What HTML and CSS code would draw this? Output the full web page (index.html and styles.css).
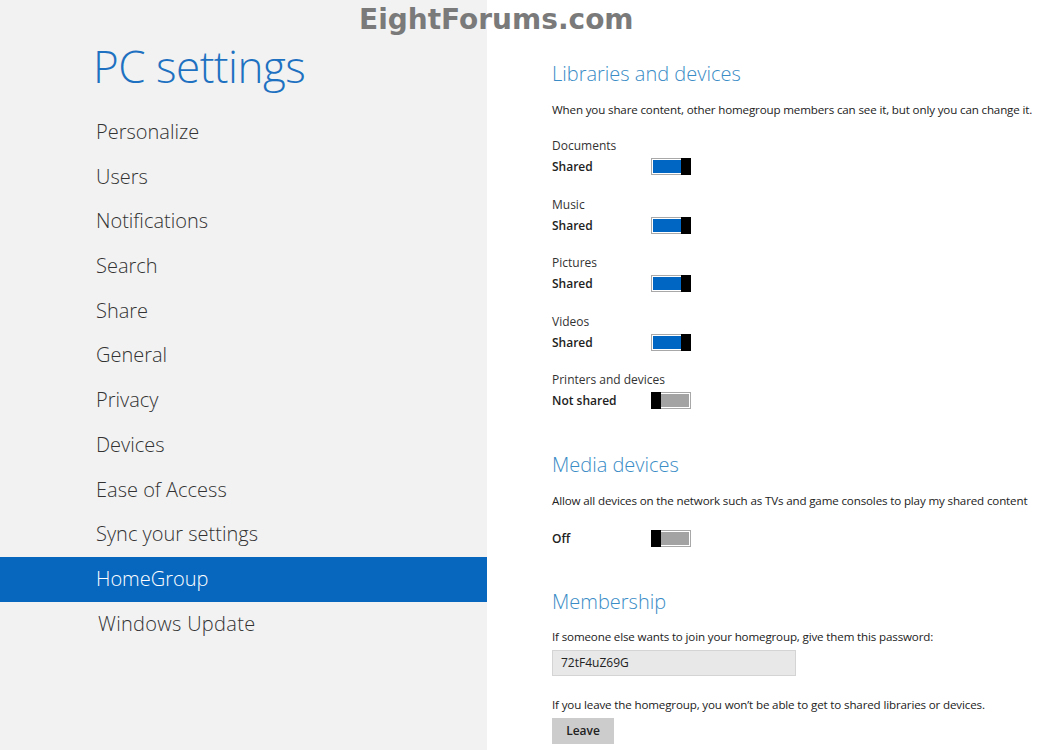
FILE: index.html
```html
<!DOCTYPE html>
<html lang="en">
<head>
  <meta charset="UTF-8" />
  <title>PC settings - HomeGroup</title>
  <link rel="stylesheet" href="styles.css">
</head>
<body>

  <div class="watermark">EightForums.com</div>

  <!-- LEFT MENU -->
  <div class="sidebar">
    <h1>PC settings</h1>
    <ul class="menu">
      <li>Personalize</li>
      <li>Users</li>
      <li>Notifications</li>
      <li>Search</li>
      <li>Share</li>
      <li>General</li>
      <li>Privacy</li>
      <li>Devices</li>
      <li>Ease of Access</li>
      <li>Sync your settings</li>
      <li class="active">HomeGroup</li>
      <li class="update">Windows Update</li>
    </ul>
  </div>

  <!-- HOMEGROUP PAGE -->
  <div class="content">
    <h2>Libraries and devices</h2>
    <p class="desc">When you share content, other homegroup members can see it, but only you can change it.</p>

    <div class="setting">
      <div class="name">Documents</div>
      <div class="state"><span>Shared</span><div class="toggle on"></div></div>
    </div>
    <div class="setting">
      <div class="name">Music</div>
      <div class="state"><span>Shared</span><div class="toggle on"></div></div>
    </div>
    <div class="setting">
      <div class="name">Pictures</div>
      <div class="state"><span>Shared</span><div class="toggle on"></div></div>
    </div>
    <div class="setting">
      <div class="name">Videos</div>
      <div class="state"><span>Shared</span><div class="toggle on"></div></div>
    </div>
    <div class="setting">
      <div class="name">Printers and devices</div>
      <div class="state"><span>Not shared</span><div class="toggle"></div></div>
    </div>

    <h2 class="section-title">Media devices</h2>
    <p class="desc">Allow all devices on the network such as TVs and game consoles to play my shared content</p>
    <div class="state media"><span>Off</span><div class="toggle"></div></div>

    <h2 class="section-title membership">Membership</h2>
    <p class="desc">If someone else wants to join your homegroup, give them this password:</p>
    <div class="password">72tF4uZ69G</div>
    <p class="desc leave-text">If you leave the homegroup, you won’t be able to get to shared libraries or devices.</p>
    <button class="leave">Leave</button>
  </div>

</body>
</html>
```

FILE: styles.css
```css
body {
  margin: 0;
  padding: 0;
  display: flex;
  height: 750px;
  overflow: hidden;
  font-family: 'Open Sans', 'Noto Sans', sans-serif;
  background-color: #ffffff;
  color: #222222;
}

.watermark {
  position: absolute;
  top: 3px;
  left: 359px;
  font-family: 'DejaVu Sans', sans-serif;
  font-weight: bold;
  font-size: 28px;
  color: #7a7a7a;
}

.sidebar {
  width: 487px;
  flex-shrink: 0;
  background-color: #f2f2f2;
}

.sidebar h1 {
  margin: 0;
  padding: 36px 0 0 93px;
  height: 74px;
  font-size: 44px;
  font-weight: 300;
  line-height: 60px;
  color: #1e71c1;
  letter-spacing: -0.5px;
}

.menu {
  list-style: none;
  margin: 0;
  padding: 0;
}

.menu li {
  height: 44.7px;
  line-height: 44.7px;
  padding-left: 96px;
  font-size: 20px;
  font-weight: 300;
  color: #333333;
}

.menu li.active {
  background-color: #0767bf;
  color: #ffffff;
}

.menu li.update {
  padding-left: 98px;
  letter-spacing: 0.3px;
}

.content {
  flex: 1;
  padding: 59px 0 0 65px;
}

h2 {
  margin: 0;
  font-size: 20px;
  font-weight: 300;
  line-height: 30px;
  color: #3a8cc6;
}

.desc {
  margin: 12px 0 0 0;
  font-size: 11.6px;
  line-height: 18px;
  letter-spacing: -0.15px;
  white-space: nowrap;
}

.setting {
  margin-top: 17.6px;
}

.setting:first-of-type {
  margin-top: 17px;
}

.name {
  font-size: 12px;
  line-height: 20px;
  color: #333333;
}

.state {
  display: flex;
  align-items: center;
  height: 21px;
  font-size: 12px;
  font-weight: 600;
}

.state span {
  width: 99px;
}

.toggle {
  position: relative;
  width: 36px;
  height: 13px;
  border: 1px solid #a8a8a8;
  padding: 1px;
  background-color: #a3a3a3;
  background-clip: content-box;
}

.toggle::after {
  content: '';
  position: absolute;
  top: -1px;
  left: -1px;
  width: 10px;
  height: 17px;
  background-color: #000000;
}

.toggle.on {
  background-color: #0066c4;
}

.toggle.on::after {
  left: auto;
  right: -1px;
}

.section-title {
  margin-top: 39px;
}

.state.media {
  margin-top: 17.5px;
}

.membership {
  margin-top: 38px;
}

.membership + .desc {
  margin-top: 11px;
}

.password {
  margin-top: 4px;
  width: 234px;
  height: 24px;
  line-height: 24px;
  padding-left: 8px;
  border: 1px solid #d4d4d4;
  background-color: #e8e8e8;
  font-size: 12px;
}

.leave-text {
  margin-top: 20px;
}

.leave {
  display: block;
  margin-top: 4px;
  width: 62px;
  height: 26px;
  border: none;
  background-color: #cccccc;
  font-family: 'Open Sans', sans-serif;
  font-size: 12px;
  font-weight: 600;
  color: #222222;
  padding: 0;
}
```
